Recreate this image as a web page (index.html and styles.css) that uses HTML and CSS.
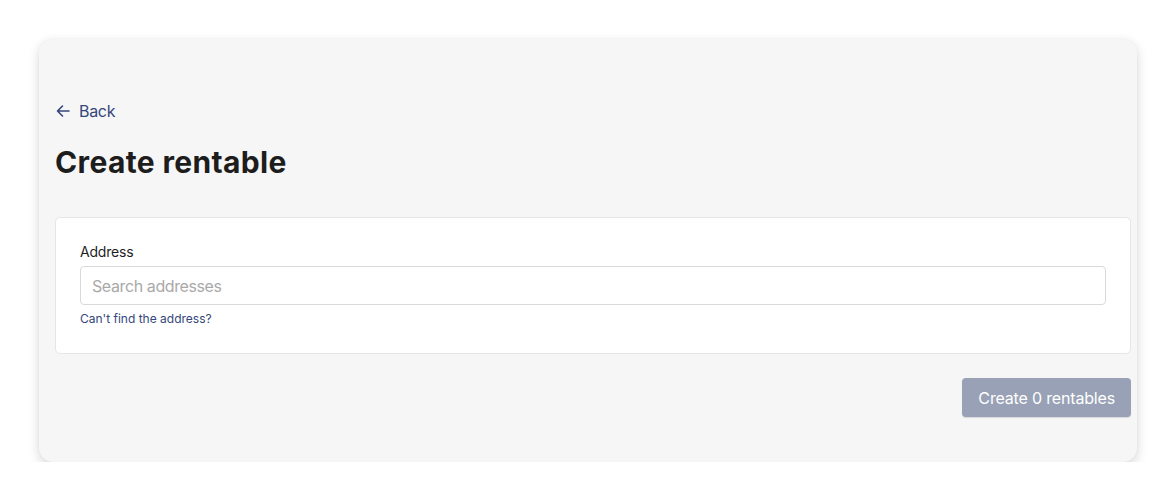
FILE: index.html
```html
<!DOCTYPE html>
<html lang="en">
<head>
<meta charset="utf-8">
<title>Create rentable</title>
<link rel="stylesheet" href="styles.css">
</head>
<body>
<main class="panel">
  <a class="back" href="#">
    <svg class="back-icon" viewBox="0 0 16 16" width="16" height="16" aria-hidden="true">
      <path d="M14 8H2.5M7.5 3L2.5 8l5 5" fill="none" stroke="currentColor" stroke-width="1.6" stroke-linecap="round" stroke-linejoin="round"/>
    </svg>
    <span>Back</span>
  </a>
  <h1 class="title">Create rentable</h1>
  <section class="card">
    <label class="label" for="addr">Address</label>
    <input class="input" id="addr" type="text" placeholder="Search addresses">
    <a class="help" href="#">Can't find the address?</a>
  </section>
  <div class="actions">
    <button class="btn" type="button" disabled>Create 0 rentables</button>
  </div>
</main>
</body>
</html>
```

FILE: styles.css
```css
* { box-sizing: border-box; }
html, body { margin: 0; background: #ffffff; }
body {
  font-family: Inter, "Liberation Sans", sans-serif;
  padding: 39px 39px 0 39px;
}
.panel {
  width: 1098px;
  height: 423px;
  background: #f6f6f6;
  border-radius: 14px;
  box-shadow: 0 4px 12px rgba(0,0,0,0.16), 0 0 2px rgba(0,0,0,0.05);
  padding: 60px 6px 45px 16px;
  display: flex;
  flex-direction: column;
}
.back {
  display: inline-flex;
  align-items: center;
  gap: 8px;
  align-self: flex-start;
  color: #34467a;
  text-decoration: none;
  font-size: 16px;
  line-height: 24px;
  letter-spacing: -0.3px;
}
.back-icon { display: block; }
.title {
  margin: 21px 0 37px;
  font-size: 30px;
  line-height: 36px;
  font-weight: 700;
  color: #1d1d1d;
  letter-spacing: 0.35px;
}
.card {
  background: #ffffff;
  border: 1px solid #e6e6e6;
  border-radius: 5px;
  padding: 24px 24px 26px;
  display: flex;
  flex-direction: column;
}
.label {
  font-size: 14px;
  line-height: 20px;
  color: #1f1f1f;
  letter-spacing: -0.2px;
}
.input {
  margin-top: 4px;
  height: 39px;
  border: 1px solid #d9d9d9;
  border-radius: 4px;
  padding: 0 11px;
  font-family: inherit;
  font-size: 16px;
  letter-spacing: -0.4px;
  color: #222;
  background: #fff;
  outline: none;
}
.input::placeholder { color: #a9a9a9; }
.help {
  margin-top: 6px;
  font-size: 12px;
  line-height: 16px;
  color: #34467a;
  text-decoration: none;
  align-self: flex-start;
}
.actions {
  margin-top: 24px;
  display: flex;
  justify-content: flex-end;
}
.btn {
  height: 39px;
  padding: 0 16px;
  border: none;
  border-radius: 4px;
  background: #98a1b5;
  color: #ffffff;
  font-family: inherit;
  font-size: 16px;
  letter-spacing: -0.17px;
  box-shadow: 0 1px 1px rgba(0,0,0,0.12);
}
```
